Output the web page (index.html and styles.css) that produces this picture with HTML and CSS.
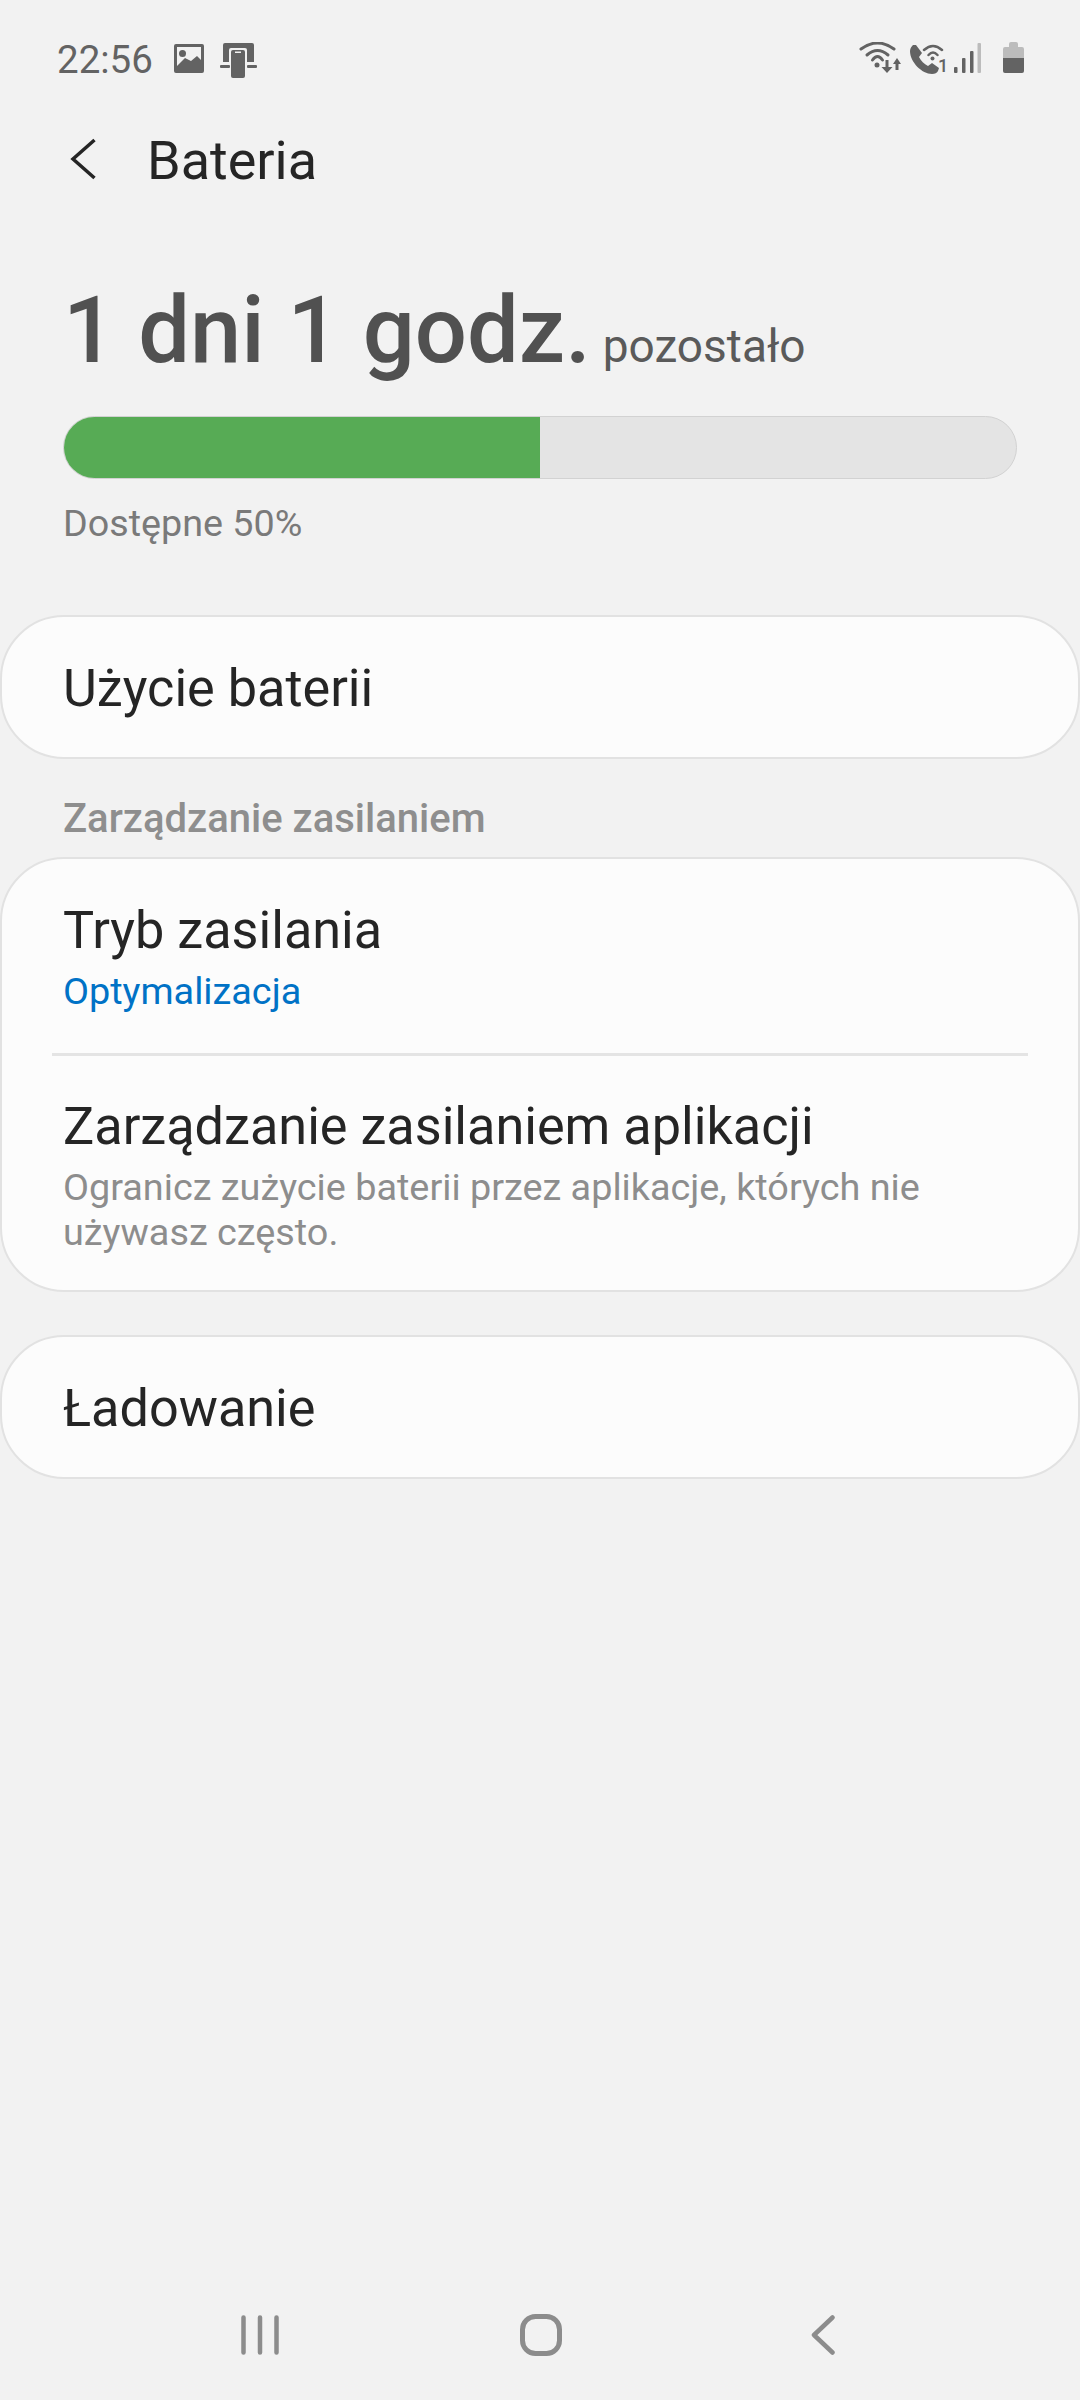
FILE: index.html
```html
<!DOCTYPE html>
<html lang="pl">

<head>
    <meta charset="UTF-8">
    <title>Bateria</title>
    <link rel="stylesheet" href="styles.css">
</head>

<body>
    <div class="status">
        <div class="status-left">
            <span class="clock">22:56</span>
            <svg class="ic-image" width="30" height="29" viewBox="0 0 30 29">
                <path fill="#636363" fill-rule="evenodd" d="M2 0h26a2 2 0 0 1 2 2v25a2 2 0 0 1-2 2H2a2 2 0 0 1-2-2V2a2 2 0 0 1 2-2zM3 3v19l8-8 6 3 6-5 4 4V3z"/>
                <circle cx="8.500" cy="9.500" r="3.500" fill="#636363"/>
            </svg>
            <svg class="ic-dex" width="37" height="35" viewBox="0 0 37 35">
                <path fill="#636363" d="M5 0h27a2 2 0 0 1 2 2v17h-7V7a2 2 0 0 0-2-2H11a2 2 0 0 0-2 2v12H3V2a2 2 0 0 1 2-2z"/>
                <rect y="22" width="10" height="3" rx="1" fill="#636363"/>
                <rect x="27" y="22" width="10" height="3" rx="1" fill="#636363"/>
                <rect x="11" y="7" width="14" height="28" rx="2" fill="#636363"/>
                <rect x="15" y="8.500" width="6" height="1.500" fill="#f2f2f2"/>
            </svg>
        </div>
        <div class="status-right">
            <svg width="42" height="31" viewBox="0 0 42 31">
                <g fill="none" stroke="#636363" stroke-width="3" stroke-linecap="round">
                    <path d="M2 7Q18.500-5 35 7"/>
                    <path d="M8 13Q18.500 4 29 13"/>
                    <path d="M13.500 18Q18.500 11 23.500 18"/>
                </g>
                <circle cx="18" cy="23" r="2.500" fill="#636363"/>
                <path fill="#636363" d="M26.500 18h3v7h4l-5.500 6-5.500-6h4zM36.500 28h3v-6h2.500l-4-6-4 6h2.500z"/>
            </svg>
            <svg class="ic-call" width="40" height="34" viewBox="0 0 40 34">
                <path fill="#636363" d="M7 2l6 8-3 4c2 4 5 7 9 9l4-3 7 5-1 3c-1 2-3 3-6 3C13 31 1 19 1 8c0-3 2-5 3-6z"/>
                <g fill="none" stroke="#636363" stroke-width="2.500" stroke-linecap="round">
                    <path d="M15 7Q24-1 33 7"/>
                    <path d="M19.500 12Q24 7 28.500 12"/>
                </g>
                <circle cx="23.500" cy="15.500" r="2" fill="#636363"/>
                <text class="sim" x="29" y="29">1</text>
            </svg>
            <svg class="ic-signal" width="27" height="30" viewBox="0 0 27 30">
                <rect x="0" y="24" width="3.500" height="6" rx="1" fill="#636363"/>
                <rect x="8" y="15" width="3.500" height="15" rx="1" fill="#636363"/>
                <rect x="16" y="8" width="3.500" height="22" rx="1" fill="#636363"/>
                <rect x="23.500" y="0" width="3.500" height="30" rx="1" fill="#bcbcbc"/>
            </svg>
            <svg class="ic-batt" width="21" height="31" viewBox="0 0 21 31">
                <path fill="#bcbcbc" d="M6 2a2 2 0 0 1 2-2h5a2 2 0 0 1 2 2v3h4a2 2 0 0 1 2 2v9H0V7a2 2 0 0 1 2-2h4z"/>
                <path fill="#636363" d="M0 16h21v13a2 2 0 0 1-2 2H2a2 2 0 0 1-2-2z"/>
            </svg>
        </div>
    </div>

    <div class="appbar">
        <svg class="back" width="26" height="42" viewBox="0 0 26 42">
            <path d="M24.500 2L3 21l21.500 19" fill="none" stroke="#252525" stroke-width="3.500"/>
        </svg>
        <h1 class="title">Bateria</h1>
    </div>

    <main class="content">
        <section class="summary">
            <p class="remaining"><span class="big">1 dni 1 godz.</span><span class="left">pozostało</span></p>
            <div class="bar">
                <div class="bar-fill" style="width: 50%"></div>
            </div>
            <p class="available">Dostępne 50%</p>
        </section>

        <div class="card single">
            <p class="row-title">Użycie baterii</p>
        </div>

        <h2 class="section">Zarządzanie zasilaniem</h2>

        <div class="card">
            <div class="row">
                <p class="row-title">Tryb zasilania</p>
                <p class="row-sub blue">Optymalizacja</p>
            </div>
            <div class="divider"></div>
            <div class="row row-last">
                <p class="row-title">Zarządzanie zasilaniem aplikacji</p>
                <p class="row-sub">Ogranicz zużycie baterii przez aplikacje, których nie używasz często.</p>
            </div>
        </div>

        <div class="card single charging">
            <p class="row-title">Ładowanie</p>
        </div>
    </main>

    <nav class="navbar">
        <svg width="38" height="40" viewBox="0 0 38 40">
            <g stroke="#8c8c8c" stroke-width="4.500" stroke-linecap="round">
                <path d="M2.500 2.500v35M19 2.500v35M35.500 2.500v35"/>
            </g>
        </svg>
        <svg class="home" width="42" height="42" viewBox="0 0 42 42">
            <rect x="2.500" y="2.500" width="37" height="37" rx="13" fill="none" stroke="#8c8c8c" stroke-width="5"/>
        </svg>
        <svg width="32" height="40" viewBox="0 0 32 40">
            <path d="M29.500 2.500L11 20l18.500 17.500" fill="none" stroke="#8c8c8c" stroke-width="4.500" stroke-linecap="round" stroke-linejoin="round"/>
        </svg>
    </nav>
</body>

</html>
```

FILE: styles.css
```css
* {
    box-sizing: border-box;
}

body {
    margin: 0;
    width: 1080px;
    height: 2400px;
    display: flex;
    flex-direction: column;
    background-color: #f2f2f2;
    font-family: Roboto, sans-serif;
    color: #252525;
}

p,
h1,
h2 {
    margin: 0;
    font-weight: 400;
}

.status {
    height: 116px;
    padding: 42px 56px 0 57px;
    display: flex;
    justify-content: space-between;
    align-items: flex-start;
}

.status-left {
    display: flex;
    align-items: flex-start;
}

.clock {
    font-size: 38.5px;
    line-height: 32px;
    color: #636363;
    width: 117px;
    margin-top: 2px;
}

.ic-image {
    margin-top: 2px;
}

.ic-dex {
    margin-left: 16px;
    margin-top: 1px;
}

.status-right {
    display: flex;
    align-items: flex-start;
    gap: 8px;
}

.ic-call {
    margin-top: 1px;
    margin-right: -3px;
}

.ic-signal {
    margin-top: 1px;
}

.ic-batt {
    margin-left: 14px;
}

.sim {
    font-family: Roboto, sans-serif;
    font-size: 18px;
    font-weight: 500;
    fill: #636363;
}

.appbar {
    display: flex;
    align-items: center;
    height: 90px;
    padding-left: 70px;
}

.back {
    flex: none;
    margin-top: -5px;
}

.title {
    font-size: 54px;
    line-height: 60px;
    margin-left: 51px;
}

.content {
    flex: 1;
}

.summary {
    padding: 0 63px;
}

.remaining {
    margin-top: 71px;
    display: flex;
    align-items: baseline;
    white-space: nowrap;
}

.big {
    font-size: 92px;
    line-height: 108px;
    font-weight: 500;
    color: #515151;
}

.left {
    font-size: 46px;
    line-height: 1;
    margin-left: 12px;
    color: #5a5a5a;
}

.bar {
    height: 63px;
    margin-top: 31px;
    border-radius: 32px;
    background-color: #e4e4e4;
    border: 1px solid #d2d2d2;
    overflow: hidden;
}

.bar-fill {
    height: 100%;
    margin: -1px 0 0 -1px;
    box-sizing: content-box;
    padding: 1px 0 1px 1px;
    background-color: #57ab55;
}

.available {
    font-size: 37.7px;
    line-height: 44px;
    color: #7a7a7a;
    margin-top: 22px;
}

.card {
    background-color: #fcfcfc;
    border: 2px solid #e2e2e2;
    border-radius: 64px;
}

.single {
    height: 144px;
    padding: 4px 61px 0;
    display: flex;
    align-items: center;
    margin-top: 70px;
}

.charging {
    margin-top: 43px;
}

.section {
    font-size: 40px;
    font-weight: 500;
    line-height: 46px;
    color: #8e8e8e;
    padding: 0 63px;
    margin: 37px 0 15px;
}

.row {
    padding: 42px 61px 39px;
}

.row-last {
    padding: 41px 61px 35px;
}

.row-title {
    font-size: 52.2px;
    line-height: 60px;
}

.row-sub {
    font-size: 37.8px;
    line-height: 45px;
    margin-top: 8px;
    color: #8d8d8d;
}

.blue {
    color: #0072c6;
}

.divider {
    height: 3px;
    margin: 0 50px;
    background-color: #e4e4e4;
}

.navbar {
    height: 120px;
    padding: 35px 245px 0 241px;
    display: flex;
    justify-content: space-between;
    align-items: flex-start;
}

.home {
    margin-top: -1px;
}
```
